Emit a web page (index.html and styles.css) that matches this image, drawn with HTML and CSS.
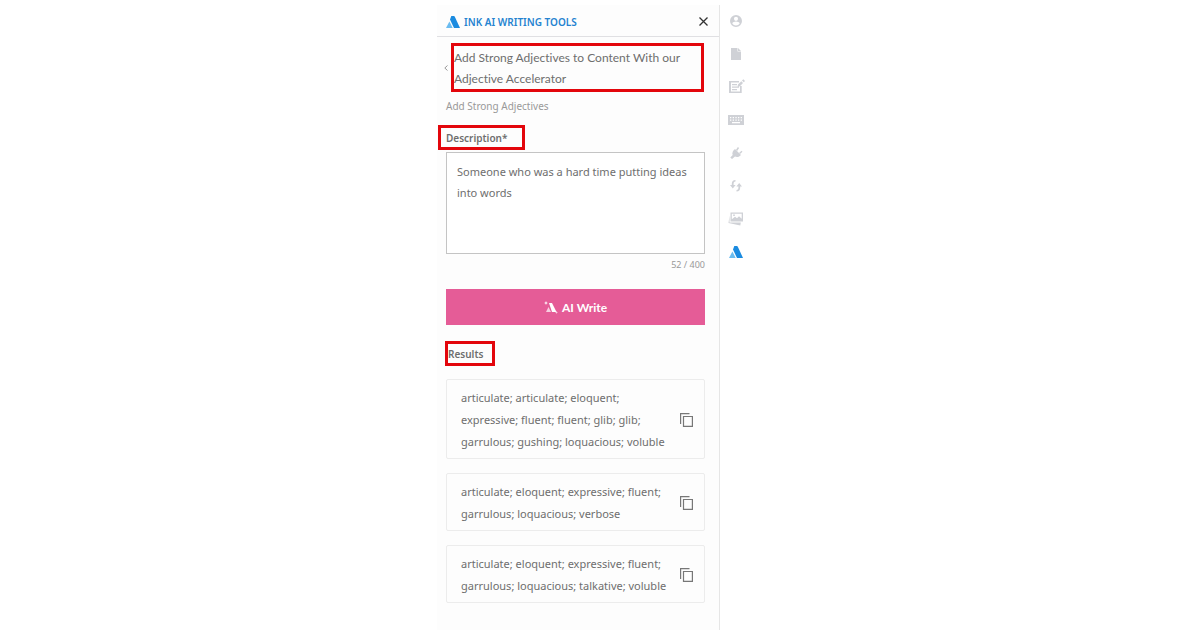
FILE: index.html
```
<!DOCTYPE html>
<html lang="en">
<head>
    <meta charset="UTF-8">
    <meta name="viewport" content="width=device-width, initial-scale=1.0">
    <title>INK AI Writing Tools</title>
    <link rel="stylesheet" href="styles.css">
</head>
<body>
    <div class="container">
        <main class="panel">
            <header class="panel-header">
                <svg width="14" height="12" viewBox="0 0 14 12">
                    <path d="M5.300 0h2.500q.6 0 .9.600L14 12H8L4 3.500z" fill="#1b8be0"/>
                    <path d="M3.400 5.500L0 12h6.700z" fill="#6bbcf0"/>
                </svg>
                <h1>INK AI WRITING TOOLS</h1>
                <button type="button" class="close" aria-label="Close">
                    <svg width="9" height="9" viewBox="0 0 9 9" fill="none" stroke="#333" stroke-width="1.3"><path d="M.5.5l8 8M8.500.5l-8 8"/></svg>
                </button>
            </header>

            <div class="tool-title">
                <button type="button" class="back" aria-label="Back">
                    <svg width="4" height="6" viewBox="0 0 4 6" fill="none" stroke="#999"><path d="M3.500.5L.8 3l2.700 2.500"/></svg>
                </button>
                <h2 class="highlight">Add Strong Adjectives to Content With our Adjective Accelerator</h2>
            </div>
            <p class="subtitle">Add Strong Adjectives</p>

            <form id="writeForm">
                <label for="description" class="highlight">Description*</label>
                <textarea id="description" maxlength="400" required>Someone who was a hard time putting ideas into words</textarea>
                <p class="counter">52 / 400</p>
                <button type="submit" class="write">
                    <svg width="14" height="13" viewBox="0 0 14 13" fill="#fff">
                        <path d="M5 2h3l4.500 9H8z"/>
                        <path d="M4.500 6L2 11h5z" opacity=".7"/>
                        <path d="M2 0l.6 1.500L4 2l-1.400.6L2 4l-.6-1.400L0 2l1.400-.5z"/>
                        <path d="M12.500 10l.4 1.100 1.100.4-1.100.4-.4 1.100-.4-1.100-1.100-.4 1.100-.4z" opacity=".7"/>
                    </svg>
                    AI Write
                </button>
            </form>

            <h3 class="highlight">Results</h3>
            <ul class="results">
                <li>
                    <p>articulate; articulate; eloquent; expressive; fluent; fluent; glib; glib; garrulous; gushing; loquacious; voluble</p>
                    <button type="button" class="copy" aria-label="Copy">
                        <svg width="13" height="14" viewBox="0 0 13 14" fill="none" stroke="#777"><path d="M.6 11V.6H9.500M3.500 3.500h8.900v9.900H3.500z" stroke-width="1.200"/></svg>
                    </button>
                </li>
                <li>
                    <p>articulate; eloquent; expressive; fluent; garrulous; loquacious; verbose</p>
                    <button type="button" class="copy" aria-label="Copy">
                        <svg width="13" height="14" viewBox="0 0 13 14" fill="none" stroke="#777"><path d="M.6 11V.6H9.500M3.500 3.500h8.900v9.900H3.500z" stroke-width="1.200"/></svg>
                    </button>
                </li>
                <li>
                    <p>articulate; eloquent; expressive; fluent; garrulous; loquacious; talkative; voluble</p>
                    <button type="button" class="copy" aria-label="Copy">
                        <svg width="13" height="14" viewBox="0 0 13 14" fill="none" stroke="#777"><path d="M.6 11V.6H9.500M3.500 3.500h8.900v9.900H3.500z" stroke-width="1.200"/></svg>
                    </button>
                </li>
            </ul>
        </main>

        <nav class="rail">
            <button type="button" aria-label="Account">
                <svg width="16" height="16" viewBox="0 0 16 16"><path fill-rule="evenodd" d="M8 2a6 6 0 1 0 0 12A6 6 0 0 0 8 2zm0 1.800a2 2 0 1 1 0 4.100 2 2 0 0 1 0-4.100zm0 8.600c-1.600 0-2.900-.8-3.700-2 .1-1.200 2.500-1.900 3.700-1.900s3.600.7 3.700 1.900c-.8 1.200-2.100 2-3.700 2z"/></svg>
            </button>
            <button type="button" aria-label="Document">
                <svg width="16" height="16" viewBox="0 0 16 16"><path d="M3 2h6.500v3.500H13V14H3z"/><path d="M10 2l3 3h-3z"/></svg>
            </button>
            <button type="button" aria-label="Edit">
                <svg width="18" height="18" viewBox="0 0 18 18"><path fill-rule="evenodd" d="M2 3h10v1.500H4v9h9V8h1.700v7H2z"/><path d="M5 6h5v1.300H5zM5 8.500h7v1.300H5zM5 11h5v1.300H5zM11 6.500l-.5 2.300 2.400-.5L16 5l-1.700-1.800zM15 2.500l1.800 1.800L18 3 16.300 1.200z"/></svg>
            </button>
            <button type="button" aria-label="Keyboard">
                <svg width="16" height="16" viewBox="0 0 16 16"><path fill-rule="evenodd" d="M0 3h16v10H0zM2 5v1.200h1.300V5zm2.700 0v1.200H6V5zm2.700 0v1.200h1.300V5zM10 5v1.200h1.300V5zm2.700 0v1.200H14V5zM2 7.500v1.200h1.300V7.500zm2.700 0v1.200H6V7.500zm2.700 0v1.200h1.300V7.500zm2.600 0v1.200h1.300V7.500zm2.700 0v1.200H14V7.500zM4 10v1.300h8V10z"/></svg>
            </button>
            <button type="button" aria-label="Plugins">
                <svg width="16" height="16" viewBox="0 0 16 16"><path d="M7 4l6 6c-1.500 1.900-4 2.600-6 1.600L4 14l-1.700-1.400L4.700 10C3.700 8 5 5.500 7 4z"/><path d="M8.500 5.500l2-3M11.500 8.500l2.500-2.200" fill="none" stroke="#cfd1d6" stroke-width="1.500"/></svg>
            </button>
            <button type="button" aria-label="Sync">
                <svg width="16" height="16" viewBox="0 0 16 16"><path d="M7.500 2v1.600C6 3.800 5.600 4.500 5.600 6v1h2L4.800 10.500 2 7h1.800V6c0-2.600 1.200-3.800 3.700-4z"/><path d="M8.500 13.500v-1.600c1.500-.2 1.900-.9 1.900-2.400v-1h-2L11.200 5 14 8.500h-1.800v1c0 2.600-1.200 3.800-3.700 4z"/></svg>
            </button>
            <button type="button" aria-label="Images">
                <svg width="16" height="16" viewBox="0 0 16 16"><path fill-rule="evenodd" d="M2.500 1.500H15v9H2.500zm1.300 6.800L7 5.800l2 1.500 2-2 2.700 2.500V2.700H3.800z"/><circle cx="6" cy="4.200" r=".9"/><path d="M1.500 4.500L.5 12l11.800 2.500.5-3H1.500z"/></svg>
            </button>
            <button type="button" aria-label="AI Writing Tools">
                <svg width="14" height="12" viewBox="0 0 14 12">
                    <path d="M5.300 0h2.500q.6 0 .9.600L14 12H8L4 3.500z" fill="#1b8be0"/>
                    <path d="M3.400 5.500L0 12h6.700z" fill="#6bbcf0"/>
                </svg>
            </button>
        </nav>
    </div>
</body>
</html>
```
FILE: styles.css
```
* {
    box-sizing: border-box;
}

body {
    font-family: "Noto Sans", sans-serif;
    font-size: 11px;
    background-color: #fff;
    color: #6e6e6e;
    margin: 0;
}

h1, h2, h3, p, ul {
    margin: 0;
    padding: 0;
}

button {
    display: flex;
    align-items: center;
    justify-content: center;
    background: none;
    border: none;
    padding: 0;
    cursor: pointer;
}

svg {
    display: block;
    flex-shrink: 0;
}

.container {
    display: flex;
    max-width: 326px;
    min-height: 100vh;
    margin: 0 auto;
    padding-top: 5px;
}

.panel {
    flex: 1;
    min-width: 0;
    background: #fdfdfd;
    border-right: 1px solid #e6e6e6;
}

.panel-header {
    display: flex;
    align-items: center;
    gap: 4px;
    height: 32px;
    padding: 2px 11px 0 9px;
    border-bottom: 1px solid #e0e0e3;
}

h1 {
    flex: 1;
    font-size: 10px;
    font-weight: 600;
    color: #2583d0;
}

.highlight {
    border: 3px solid #e3060c;
}

.tool-title {
    display: flex;
    align-items: center;
    gap: 3px;
    padding: 6px 15px 0 7px;
}

.back {
    width: 4px;
}

h2 {
    flex: 1;
    padding-top: 1px;
    font-family: Lato, sans-serif;
    font-size: 12px;
    font-weight: 400;
    font-variant-ligatures: none;
    line-height: 21px;
}

.subtitle {
    padding: 6px 9px 0;
    font-size: 10px;
    line-height: 16px;
    color: #999;
}

form {
    display: flex;
    flex-direction: column;
    padding: 11px 14px 0 9px;
}

label {
    align-self: flex-start;
    margin-left: -8px;
    padding: 1px 15px 0 5px;
    font-size: 10px;
    font-weight: 600;
    line-height: 18px;
}

textarea {
    height: 102px;
    margin-top: 2px;
    padding: 8px 10px;
    border: 1px solid #c4c4c4;
    background: #fff;
    color: inherit;
    font: inherit;
    line-height: 21px;
    resize: none;
}

.counter {
    padding-top: 3px;
    font-size: 9px;
    line-height: 16px;
    text-align: right;
    color: #999;
}

.write {
    gap: 4px;
    height: 36px;
    margin-top: 16px;
    background: #e55c97;
    color: #fff;
    font-family: Lato, sans-serif;
    font-size: 12px;
    font-weight: 700;
}

h3 {
    width: fit-content;
    margin: 16px 0 13px 8px;
    padding: 1px 9px 0 0;
    font-size: 10px;
    font-weight: 600;
    line-height: 18px;
}

.results {
    display: flex;
    flex-direction: column;
    gap: 14px;
    padding: 0 14px 27px 9px;
    list-style: none;
}

.results li {
    display: flex;
    align-items: center;
    justify-content: space-between;
    gap: 10px;
    padding: 7px 11px 5px 14px;
    border: 1px solid #ececec;
    border-radius: 2px;
    line-height: 22px;
}

.rail {
    width: 43px;
    padding-right: 11px;
}

.rail button {
    width: 100%;
    height: 33px;
    padding-bottom: 2px;
    fill: #cfd1d6;
}
```
